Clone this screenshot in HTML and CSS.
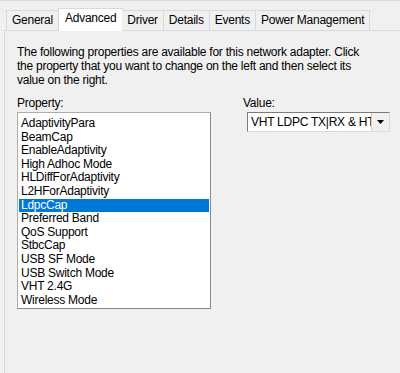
FILE: index.html
```html
<!DOCTYPE html>
<html lang="en">
<head>
    <meta charset="UTF-8">
    <title>Adapter Properties - Advanced</title>
    <link rel="stylesheet" href="styles.css">
</head>
<body>
    <div class="dialog">
        <div class="tabs">
            <div class="tab">General</div>
            <div class="tab tab-active">Advanced</div>
            <div class="tab">Driver</div>
            <div class="tab">Details</div>
            <div class="tab">Events</div>
            <div class="tab">Power Management</div>
        </div>

        <div class="panel">
            <p class="intro">The following properties are available for this network adapter. Click the property that you want to change on the left and then select its value on the right.</p>

            <div class="fields">
                <div class="field-property">
                    <label class="field-label">Property:</label>
                    <ul class="listbox">
                        <li>AdaptivityPara</li>
                        <li>BeamCap</li>
                        <li>EnableAdaptivity</li>
                        <li>High Adhoc Mode</li>
                        <li>HLDiffForAdaptivity</li>
                        <li>L2HForAdaptivity</li>
                        <li class="selected">LdpcCap</li>
                        <li>Preferred Band</li>
                        <li>QoS Support</li>
                        <li>StbcCap</li>
                        <li>USB SF Mode</li>
                        <li>USB Switch Mode</li>
                        <li>VHT 2.4G</li>
                        <li>Wireless Mode</li>
                    </ul>
                </div>

                <div class="field-value">
                    <label class="field-label">Value:</label>
                    <div class="combo">
                        <span class="combo-text">VHT LDPC TX|RX &amp; HT LDPC TX|RX</span>
                        <span class="combo-btn">
                            <svg width="7" height="4" viewBox="0 0 7 4"><path d="M0 0h7L3.5 4z" fill="#000"/></svg>
                        </span>
                    </div>
                </div>
            </div>
        </div>
    </div>
</body>
</html>
```

FILE: styles.css
```css
body {
    margin: 0;
    background: #f0f0f0;
    font-family: "Liberation Sans", Arial, sans-serif;
    font-size: 12px;
    letter-spacing: -0.25px;
    color: #000;
    overflow: hidden;
}

.dialog {
    display: flex;
    flex-direction: column;
    height: 373px;
    box-sizing: border-box;
    padding-top: 8px;
    padding-left: 4px;
    border-top: 1px solid #dadada;
}

.tabs {
    display: flex;
    padding-left: 2px;
    height: 21px;
    align-items: flex-end;
    position: relative;
    z-index: 1;
}

.tab {
    height: 20px;
    line-height: 19px;
    padding: 0 5px;
    border: 1px solid #d9d9d9;
    border-bottom: none;
    border-left: none;
    background: #f0f0f0;
    box-sizing: border-box;
}

.tab:first-child {
    border-left: 1px solid #d9d9d9;
}

.tab-active {
    height: 23px;
    line-height: 19px;
    margin-bottom: -1px;
    padding: 0 6px;
    background: #fff;
    border-left: 1px solid #d9d9d9;
    margin-left: -1px;
    margin-right: -1px;
    border-right: 1px solid #d9d9d9;
}

.panel {
    flex: 1;
    border: 1px solid #d9d9d9;
    border-right: none;
    border-bottom: none;
    background: #f0f0f0;
    padding: 14px 0 0 12px;
}

.intro {
    margin: 0;
    line-height: 14px;
    width: 350px;
}

.fields {
    display: flex;
    margin-top: 9px;
}

.field-property {
    width: 226px;
}

.field-label {
    display: block;
    line-height: 14px;
    margin-bottom: 2px;
}

.listbox {
    list-style: none;
    margin: 0;
    padding: 4px 1px 1px;
    width: 190px;
    border: 1px solid #828790;
    border-top-color: #adadad;
    border-left-color: #adadad;
    background: #fff;
}

.listbox li {
    height: 13.6px;
    line-height: 13.6px;
    padding-left: 2px;
    white-space: nowrap;
}

.listbox .selected {
    background: #0078d7;
    color: #fff;
}

.combo {
    display: flex;
    margin-left: 4px;
    margin-top: 1px;
    width: 143px;
    height: 20px;
    border: 1px solid #7a7a7a;
    border-bottom-color: #d9d9d9;
    border-right-color: #d9d9d9;
    background: #fff;
    box-sizing: border-box;
    overflow: hidden;
}

.combo-text {
    flex: 1;
    padding-left: 3px;
    line-height: 18px;
    white-space: nowrap;
    overflow: hidden;
}

.combo-btn {
    width: 17px;
    display: flex;
    align-items: center;
    justify-content: center;
    background: #f0f0f0;
    border-left: 1px solid #d0d0d0;
}
```
